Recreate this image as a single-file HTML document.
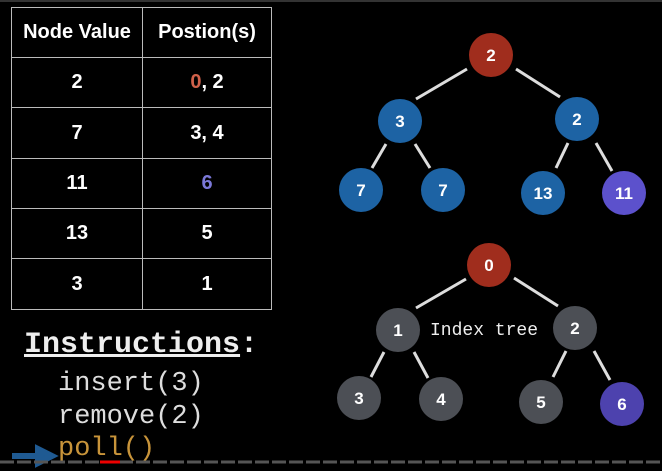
<!DOCTYPE html><html><head><style>
body{margin:0;width:662px;height:471px;background:#000;overflow:hidden;position:relative;font-family:"Liberation Sans",sans-serif}
table{position:absolute;left:11px;top:7px;border-collapse:collapse}
td{border:1.5px solid #bbb;color:#fff;font-weight:bold;font-size:20px;text-align:center;height:49px;padding:0;box-sizing:border-box}
.m{font-family:"Liberation Mono","DejaVu Sans Mono",monospace;position:absolute;color:#ddd;font-size:27px}
</style></head><body>
<div style="position:absolute;left:0;top:0;width:662px;height:2px;background:#333"></div>
<table>
<tr><td style="width:131px;height:50px">Node Value</td><td style="width:129px">Postion(s)</td></tr>
<tr><td style="height:50px">2</td><td><span style="color:#d0614a">0</span>, 2</td></tr>
<tr><td style="height:51px">7</td><td>3, 4</td></tr>
<tr><td style="height:50px">11</td><td style="color:#7b78d8">6</td></tr>
<tr><td style="height:50px">13</td><td>5</td></tr>
<tr><td style="height:51px">3</td><td>1</td></tr>
</table>
<div class="m" style="left:24px;top:328px;font-weight:bold;font-size:30px;color:#eee"><span style="text-decoration:underline">Instructions</span>:</div>
<div class="m" style="left:58px;top:369px">insert(3)</div>
<div class="m" style="left:58px;top:402px">remove(2)</div>
<div class="m" style="left:58px;top:434px;color:#c8943a">poll()</div>
<svg width="662" height="471" style="position:absolute;left:0;top:0">
<path d="M12 456H38V449L52 456L38 463V456" fill="#1f5a92" stroke="#1f5a92" stroke-width="6"/>
<line x1="0" y1="462" x2="662" y2="462" stroke="#555" stroke-width="3" stroke-dasharray="14 3"/>
<line x1="100" y1="462" x2="120" y2="462" stroke="#e00" stroke-width="3"/>
<g stroke="#ddd" stroke-width="3">
<line x1="467" y1="69" x2="416" y2="99"/><line x1="516" y1="69" x2="560" y2="97"/>
<line x1="386" y1="144" x2="372" y2="168"/><line x1="415" y1="144" x2="430" y2="168"/>
<line x1="568" y1="143" x2="556" y2="168"/><line x1="596" y1="143" x2="612" y2="171"/>
<line x1="466" y1="279" x2="416" y2="308"/><line x1="514" y1="278" x2="558" y2="306"/>
<line x1="384" y1="352" x2="371" y2="377"/><line x1="414" y1="352" x2="428" y2="378"/>
<line x1="566" y1="351" x2="553" y2="377"/><line x1="594" y1="351" x2="610" y2="380"/>
</g>
<g font-family="Liberation Sans" font-weight="bold" font-size="17" fill="#fff" text-anchor="middle">
<circle cx="491" cy="55" r="22" fill="#a02d1d"/><text x="491" y="61">2</text>
<circle cx="400" cy="121" r="22" fill="#1d63a4"/><text x="400" y="127">3</text>
<circle cx="577" cy="119" r="22" fill="#1d63a4"/><text x="577" y="125">2</text>
<circle cx="361" cy="190" r="22" fill="#1d63a4"/><text x="361" y="196">7</text>
<circle cx="443" cy="190" r="22" fill="#1d63a4"/><text x="443" y="196">7</text>
<circle cx="543" cy="193" r="22" fill="#1d63a4"/><text x="543" y="199">13</text>
<circle cx="624" cy="193" r="22" fill="#5c51cc"/><text x="624" y="199">11</text>
<circle cx="489" cy="265" r="22" fill="#a02d1d"/><text x="489" y="271">0</text>
<circle cx="398" cy="330" r="22" fill="#4c4f55"/><text x="398" y="336">1</text>
<circle cx="575" cy="328" r="22" fill="#4c4f55"/><text x="575" y="334">2</text>
<circle cx="359" cy="398" r="22" fill="#4c4f55"/><text x="359" y="404">3</text>
<circle cx="441" cy="399" r="22" fill="#4c4f55"/><text x="441" y="405">4</text>
<circle cx="541" cy="402" r="22" fill="#4c4f55"/><text x="541" y="408">5</text>
<circle cx="622" cy="404" r="22" fill="#4d42ae"/><text x="622" y="410">6</text>
</g>
<text x="430" y="335" font-family="Liberation Mono,monospace" font-size="18" fill="#eee">Index tree</text>
</svg>
</body></html>
